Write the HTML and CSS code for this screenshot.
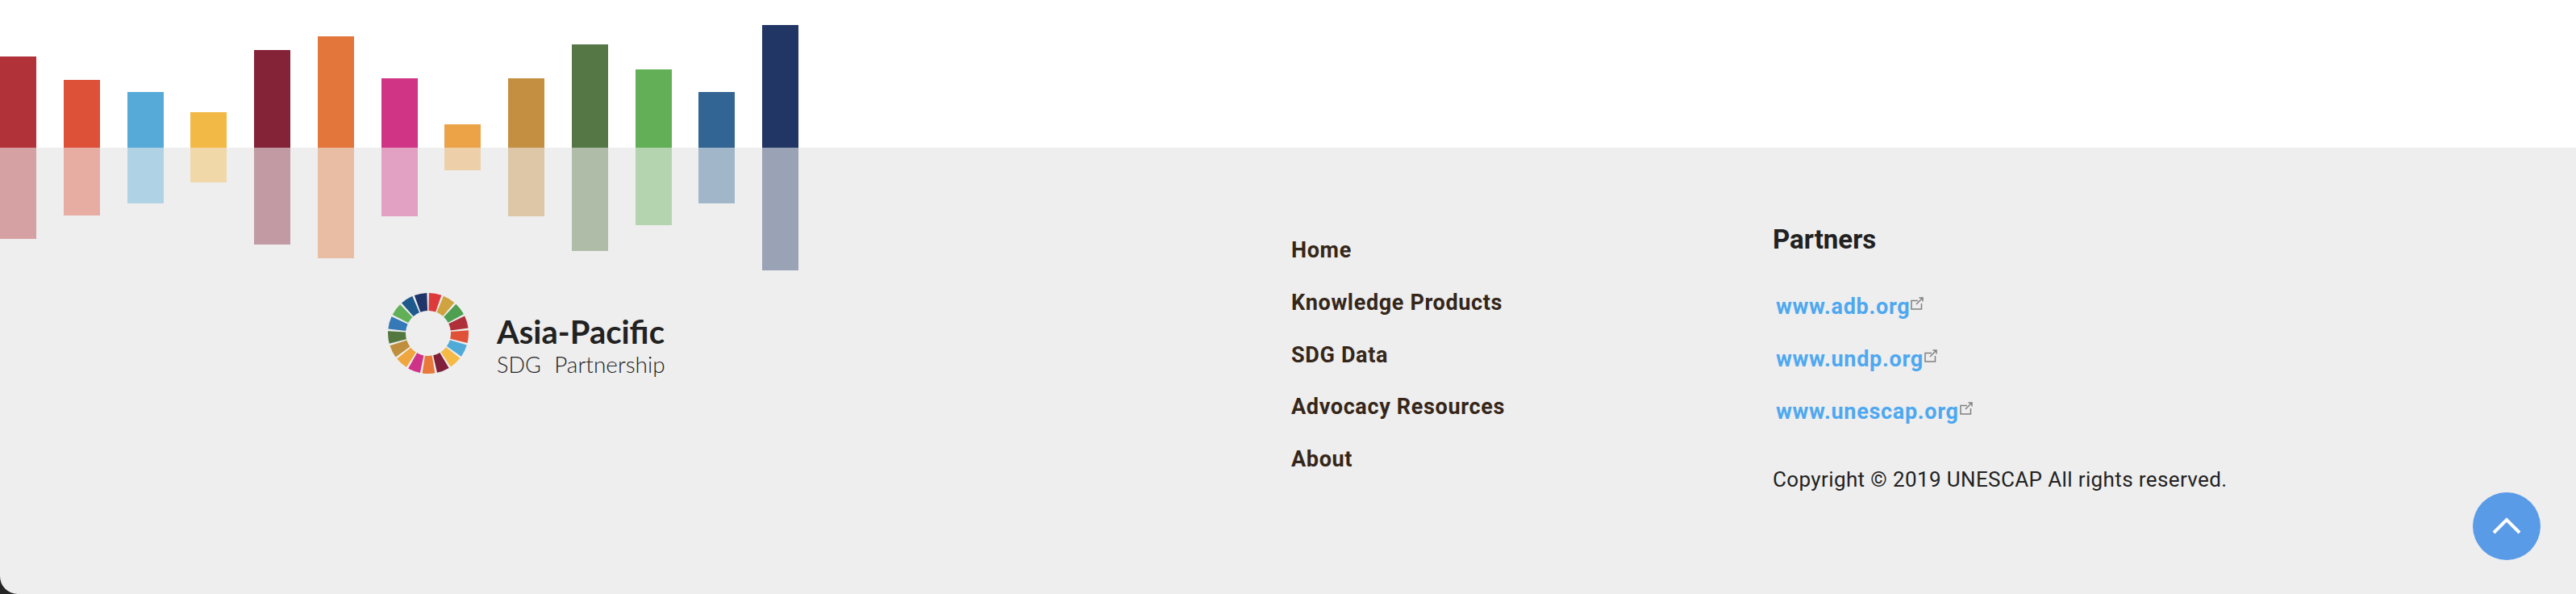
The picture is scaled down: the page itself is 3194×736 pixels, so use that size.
FILE: index.html
```html
<!DOCTYPE html>
<html lang="en">
<head>
  <meta charset="UTF-8">
  <meta name="viewport" content="width=device-width, initial-scale=1.0">
  <title>Asia-Pacific SDG Partnership</title>
  <link rel="stylesheet" href="styles.css">
</head>
<body>
  <div class="chart bars">
    <span class="bar g1" style="height:113px"></span>
    <span class="bar g2" style="height:84px"></span>
    <span class="bar g3" style="height:69px"></span>
    <span class="bar g4" style="height:44px"></span>
    <span class="bar g5" style="height:121px"></span>
    <span class="bar g6" style="height:138px"></span>
    <span class="bar g7" style="height:86px"></span>
    <span class="bar g8" style="height:29px"></span>
    <span class="bar g9" style="height:86px"></span>
    <span class="bar g10" style="height:128px"></span>
    <span class="bar g11" style="height:97px"></span>
    <span class="bar g12" style="height:69px"></span>
    <span class="bar g13" style="height:152px"></span>
  </div>

  <footer>
    <div class="foot-left">
      <div class="bars reflection">
        <span class="bar g1" style="height:113px"></span>
        <span class="bar g2" style="height:84px"></span>
        <span class="bar g3" style="height:69px"></span>
        <span class="bar g4" style="height:43px"></span>
        <span class="bar g5" style="height:120px"></span>
        <span class="bar g6" style="height:137px"></span>
        <span class="bar g7" style="height:85px"></span>
        <span class="bar g8" style="height:28px"></span>
        <span class="bar g9" style="height:85px"></span>
        <span class="bar g10" style="height:128px"></span>
        <span class="bar g11" style="height:96px"></span>
        <span class="bar g12" style="height:69px"></span>
        <span class="bar g13" style="height:152px"></span>
      </div>
      <div class="logo">
        <svg class="wheel" viewBox="-50 -50 100 100" width="100" height="100" fill="none" stroke-width="22" aria-hidden="true">
          <circle r="39" pathLength="17" stroke-dasharray="0.86 16.14" stroke="#dd3a3c" transform="rotate(-89)"/>
          <circle r="39" pathLength="17" stroke-dasharray="0.86 16.14" stroke="#cfa33f" transform="rotate(-67.8)"/>
          <circle r="39" pathLength="17" stroke-dasharray="0.86 16.14" stroke="#4e9f50" transform="rotate(-46.6)"/>
          <circle r="39" pathLength="17" stroke-dasharray="0.86 16.14" stroke="#b0303a" transform="rotate(-25.5)"/>
          <circle r="39" pathLength="17" stroke-dasharray="0.86 16.14" stroke="#e05238" transform="rotate(-4.3)"/>
          <circle r="39" pathLength="17" stroke-dasharray="0.86 16.14" stroke="#4faad8" transform="rotate(16.9)"/>
          <circle r="39" pathLength="17" stroke-dasharray="0.86 16.14" stroke="#f4ba45" transform="rotate(38.1)"/>
          <circle r="39" pathLength="17" stroke-dasharray="0.86 16.14" stroke="#7f1f3a" transform="rotate(59.2)"/>
          <circle r="39" pathLength="17" stroke-dasharray="0.86 16.14" stroke="#e8793a" transform="rotate(80.4)"/>
          <circle r="39" pathLength="17" stroke-dasharray="0.86 16.14" stroke="#cf3387" transform="rotate(101.6)"/>
          <circle r="39" pathLength="17" stroke-dasharray="0.86 16.14" stroke="#efa63f" transform="rotate(122.8)"/>
          <circle r="39" pathLength="17" stroke-dasharray="0.86 16.14" stroke="#c08f3d" transform="rotate(144)"/>
          <circle r="39" pathLength="17" stroke-dasharray="0.86 16.14" stroke="#527840" transform="rotate(165.1)"/>
          <circle r="39" pathLength="17" stroke-dasharray="0.86 16.14" stroke="#3579b8" transform="rotate(186.3)"/>
          <circle r="39" pathLength="17" stroke-dasharray="0.86 16.14" stroke="#61b058" transform="rotate(207.5)"/>
          <circle r="39" pathLength="17" stroke-dasharray="0.86 16.14" stroke="#1f5a8c" transform="rotate(228.7)"/>
          <circle r="39" pathLength="17" stroke-dasharray="0.86 16.14" stroke="#1f3468" transform="rotate(249.9)"/>
        </svg>
        <div class="logo-text">
          <div class="logo-name">Asia-Pacific</div>
          <div class="logo-sub">SDG <span class="logo-word">Partnership</span></div>
        </div>
      </div>
    </div>

    <nav class="foot-nav">
      <a href="#">Home</a>
      <a href="#">Knowledge Products</a>
      <a href="#">SDG Data</a>
      <a href="#">Advocacy Resources</a>
      <a href="#">About</a>
    </nav>

    <div class="partners">
      <h3>Partners</h3>
      <ul>
        <li><a href="#">www.adb.org<svg class="ext" viewBox="0 0 16 16" width="16" height="16" fill="none" stroke="#808080" stroke-width="1.5"><path d="M9 4.5H1V15h12.5V8"/><path d="M7 9l8-8M10.5 1H15v4.5"/></svg></a></li>
        <li><a href="#">www.undp.org<svg class="ext" viewBox="0 0 16 16" width="16" height="16" fill="none" stroke="#808080" stroke-width="1.5"><path d="M9 4.5H1V15h12.5V8"/><path d="M7 9l8-8M10.5 1H15v4.5"/></svg></a></li>
        <li><a href="#">www.unescap.org<svg class="ext" viewBox="0 0 16 16" width="16" height="16" fill="none" stroke="#808080" stroke-width="1.5"><path d="M9 4.5H1V15h12.5V8"/><path d="M7 9l8-8M10.5 1H15v4.5"/></svg></a></li>
      </ul>
      <p class="copyright">Copyright © 2019 UNESCAP All rights reserved.</p>
    </div>

    <a class="to-top" href="#" aria-label="Back to top">
      <svg viewBox="0 0 36 22" width="36" height="22" fill="none" stroke="#fff" stroke-width="4"><path d="M2 19 18 3l16 16"/></svg>
    </a>
  </footer>
</body>
</html>
```

FILE: styles.css
```css
* {
  box-sizing: border-box;
}
body {
  margin: 0;
  height: 736px;
  overflow: hidden;
  background: #262626;
  font-family: Roboto, sans-serif;
}
a {
  text-decoration: none;
}

.bars {
  display: flex;
  gap: 33.75px;
}
.bar {
  display: block;
  width: 45px;
}
.chart {
  height: 183px;
  align-items: flex-end;
  background: #fff;
}
.reflection {
  height: 152px;
  align-items: flex-start;
}
.reflection .bar {
  opacity: 0.41;
}
.g1 { background: #b13239; }
.g2 { background: #dd5139; }
.g3 { background: #55aad8; }
.g4 { background: #f3b947; }
.g5 { background: #842338; }
.g6 { background: #e3763b; }
.g7 { background: #d03485; }
.g8 { background: #eca348; }
.g9 { background: #c48f41; }
.g10 { background: #557745; }
.g11 { background: #62af58; }
.g12 { background: #336594; }
.g13 { background: #213665; }

footer {
  position: relative;
  display: flex;
  height: 553px;
  background: #eee;
  border-bottom-left-radius: 22px;
}
.foot-left {
  width: 1601px;
}
.logo {
  display: flex;
  align-items: flex-start;
  gap: 35px;
  margin: 28px 0 0 481px;
  color: #222;
}
.wheel {
  display: block;
  flex: none;
}
.logo-text {
  padding-top: 26px;
  font-family: Lato, sans-serif;
}
.logo-name {
  font-size: 40px;
  font-weight: 700;
  line-height: 44px;
}
.logo-sub {
  font-size: 27px;
  font-weight: 300;
  line-height: 36px;
  color: #222;
}
.logo-word {
  margin-left: 9px;
  font-size: 28px;
}

.foot-nav {
  display: flex;
  flex-direction: column;
  width: 597px;
  padding-top: 95px;
}
.foot-nav a {
  font-size: 27px;
  font-weight: 700;
  line-height: 64.75px;
  letter-spacing: 0.65px;
  color: #35261a;
}

.partners h3 {
  margin: 0;
  padding-top: 94px;
  font-size: 33px;
  font-weight: 700;
  line-height: 40px;
  color: #212121;
}
.partners ul {
  margin: 31px 0 0;
  padding: 0 0 0 4px;
  list-style: none;
}
.partners li {
  font-size: 27px;
  font-weight: 700;
  line-height: 65px;
  letter-spacing: 0.7px;
}
.partners li a {
  color: #4ea8f0;
}
.ext {
  margin-left: 1px;
  vertical-align: 5px;
}
.copyright {
  margin: 34px 0 0;
  font-size: 26px;
  line-height: 34px;
  letter-spacing: 0.38px;
  color: #222;
}

.to-top {
  position: absolute;
  right: 44px;
  bottom: 42px;
  display: flex;
  align-items: center;
  justify-content: center;
  width: 84px;
  height: 84px;
  border-radius: 50%;
  background: #5a9be8;
}
```
